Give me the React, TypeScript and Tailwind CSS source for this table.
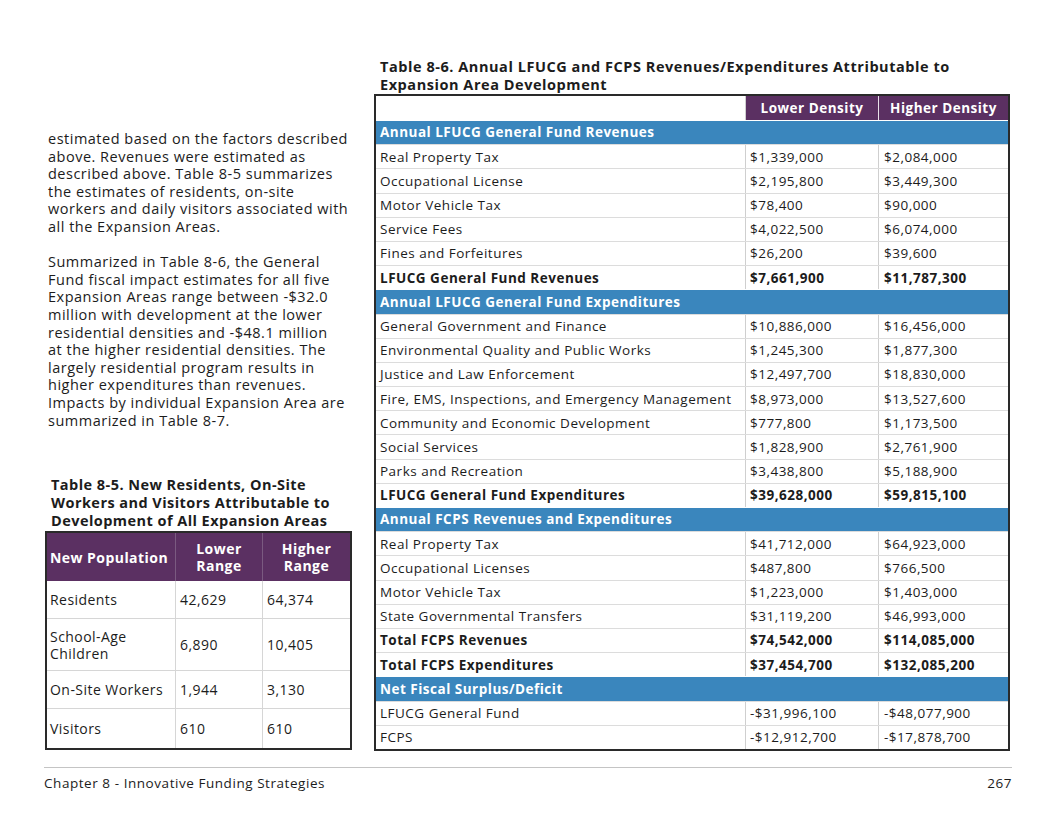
import React from 'react'

// Tabella 8-6: righe in ordine di rendering
type Row =
  | { kind: 'band'; label: string }
  | { kind: 'row'; label: string; lo: string; hi: string; bold?: boolean }

const ROWS: Row[] = [
  { kind: 'band', label: 'Annual LFUCG General Fund Revenues' },
  { kind: 'row', label: 'Real Property Tax', lo: '$1,339,000', hi: '$2,084,000' },
  { kind: 'row', label: 'Occupational License', lo: '$2,195,800', hi: '$3,449,300' },
  { kind: 'row', label: 'Motor Vehicle Tax', lo: '$78,400', hi: '$90,000' },
  { kind: 'row', label: 'Service Fees', lo: '$4,022,500', hi: '$6,074,000' },
  { kind: 'row', label: 'Fines and Forfeitures', lo: '$26,200', hi: '$39,600' },
  { kind: 'row', label: 'LFUCG General Fund Revenues', lo: '$7,661,900', hi: '$11,787,300', bold: true },
  { kind: 'band', label: 'Annual LFUCG General Fund Expenditures' },
  { kind: 'row', label: 'General Government and Finance', lo: '$10,886,000', hi: '$16,456,000' },
  { kind: 'row', label: 'Environmental Quality and Public Works', lo: '$1,245,300', hi: '$1,877,300' },
  { kind: 'row', label: 'Justice and Law Enforcement', lo: '$12,497,700', hi: '$18,830,000' },
  { kind: 'row', label: 'Fire, EMS, Inspections, and Emergency Management', lo: '$8,973,000', hi: '$13,527,600' },
  { kind: 'row', label: 'Community and Economic Development', lo: '$777,800', hi: '$1,173,500' },
  { kind: 'row', label: 'Social Services', lo: '$1,828,900', hi: '$2,761,900' },
  { kind: 'row', label: 'Parks and Recreation', lo: '$3,438,800', hi: '$5,188,900' },
  { kind: 'row', label: 'LFUCG General Fund Expenditures', lo: '$39,628,000', hi: '$59,815,100', bold: true },
  { kind: 'band', label: 'Annual FCPS Revenues and Expenditures' },
  { kind: 'row', label: 'Real Property Tax', lo: '$41,712,000', hi: '$64,923,000' },
  { kind: 'row', label: 'Occupational Licenses', lo: '$487,800', hi: '$766,500' },
  { kind: 'row', label: 'Motor Vehicle Tax', lo: '$1,223,000', hi: '$1,403,000' },
  { kind: 'row', label: 'State Governmental Transfers', lo: '$31,119,200', hi: '$46,993,000' },
  { kind: 'row', label: 'Total FCPS Revenues', lo: '$74,542,000', hi: '$114,085,000', bold: true },
  { kind: 'row', label: 'Total FCPS Expenditures', lo: '$37,454,700', hi: '$132,085,200', bold: true },
  { kind: 'band', label: 'Net Fiscal Surplus/Deficit' },
  { kind: 'row', label: 'LFUCG General Fund', lo: '-$31,996,100', hi: '-$48,077,900' },
  { kind: 'row', label: 'FCPS', lo: '-$12,912,700', hi: '-$17,878,700' },
]

const POP = [
  { label: ['Residents'], lo: '42,629', hi: '64,374', h: 'h-[38px]' },
  { label: ['School-Age', 'Children'], lo: '6,890', hi: '10,405', h: 'h-[52px]' },
  { label: ['On-Site Workers'], lo: '1,944', hi: '3,130', h: 'h-[38px]' },
  { label: ['Visitors'], lo: '610', hi: '610', h: 'h-[39px]' },
]

const PARA1 = [
  'estimated based on the factors described',
  'above. Revenues were estimated as',
  'described above. Table 8-5 summarizes',
  'the estimates of residents, on-site',
  'workers and daily visitors associated with',
  'all the Expansion Areas.',
]
const PARA2 = [
  'Summarized in Table 8-6, the General',
  'Fund fiscal impact estimates for all five',
  'Expansion Areas range between -$32.0',
  'million with development at the lower',
  'residential densities and -$48.1 million',
  'at the higher residential densities. The',
  'largely residential program results in',
  'higher expenditures than revenues.',
  'Impacts by individual Expansion Area are',
  'summarized in Table 8-7.',
]

export default function App() {
  return (
    <div className="w-[1056px] h-[816px] bg-white text-[#1c1c1c] font-['Open_Sans',sans-serif] flex flex-col">
      <div className="flex gap-[23px] pl-[48px] pt-[58px]">
        {/* Colonna sinistra: testo + tabella 8-5 */}
        <div className="w-[305px] flex flex-col pt-[72px]">
          <p className="text-[14.5px] leading-[17.6px] tracking-[0.5px]">
            {PARA1.map((l, i) => <span key={i} className="block whitespace-nowrap">{l}</span>)}
          </p>
          <p className="text-[14.5px] leading-[17.6px] tracking-[0.5px] mt-[17.6px]">
            {PARA2.map((l, i) => <span key={i} className="block whitespace-nowrap">{l}</span>)}
          </p>

          <h3 className="mt-[47px] pl-[3px] text-[14.5px] leading-[18px] font-bold tracking-[0.45px] whitespace-nowrap">
            Table 8-5. New Residents, On-Site<br />
            Workers and Visitors Attributable to<br />
            Development of All Expansion Areas
          </h3>

          <div className="-ml-[3px] mt-[1px] w-[307px] border-2 border-[#2a2a2a] text-[14px] tracking-[0.45px]">
            <div className="grid grid-cols-[129px_87px_87px] h-[48px] bg-[#5b3062] text-white font-bold leading-[17px]">
              <div className="flex items-center pl-[3px] border-r border-[#7a5a80] whitespace-nowrap">New Population</div>
              <div className="flex items-center justify-center text-center border-r border-[#7a5a80]">Lower<br />Range</div>
              <div className="flex items-center justify-center text-center">Higher<br />Range</div>
            </div>
            {POP.map((r, i) => (
              <div key={i} className={`grid grid-cols-[129px_87px_87px] ${r.h} ${i < POP.length - 1 ? 'border-b border-[#d6d6d6]' : ''}`}>
                <div className="flex flex-col justify-center pl-[3px] leading-[17px] border-r border-[#d6d6d6] whitespace-nowrap">
                  {r.label.map(l => <span key={l}>{l}</span>)}
                </div>
                <div className="flex items-center pl-[4px] border-r border-[#d6d6d6]">{r.lo}</div>
                <div className="flex items-center pl-[4px]">{r.hi}</div>
              </div>
            ))}
          </div>
        </div>

        {/* Colonna destra: tabella 8-6 */}
        <div className="w-[636px] flex flex-col -ml-[2px]">
          <h3 className="pl-[6px] text-[14.5px] leading-[18px] font-bold tracking-[0.55px] whitespace-nowrap">
            Table 8-6. Annual LFUCG and FCPS Revenues/Expenditures Attributable to<br />
            Expansion Area Development
          </h3>
          <div className="border-2 border-[#2a2a2a] text-[13.5px] tracking-[0.5px]">
            <div className="grid grid-cols-[370px_133px_129px] h-[24px]">
              <div className="bg-white border-r border-[#cfcfcf]" />
              <div className="bg-[#5b3062] text-white font-bold flex items-center justify-center border-r border-[#e8e0ea]">Lower Density</div>
              <div className="bg-[#5b3062] text-white font-bold flex items-center justify-center">Higher Density</div>
            </div>
            {ROWS.map((r, i) =>
              r.kind === 'band' ? (
                <div key={i} className="h-[24.2px] bg-[#3a86bd] text-white font-bold flex items-center pl-[4px] border-t border-white whitespace-nowrap">
                  {r.label}
                </div>
              ) : (
                <div key={i} className={`grid grid-cols-[370px_133px_129px] h-[24.2px] border-t border-[#dcdcdc] ${r.bold ? 'font-bold' : ''}`}>
                  <div className="flex items-center pl-[4px] border-r border-[#cfcfcf] whitespace-nowrap">{r.label}</div>
                  <div className="flex items-center pl-[4px] border-r border-[#cfcfcf] whitespace-nowrap">{r.lo}</div>
                  <div className="flex items-center pl-[5px] whitespace-nowrap">{r.hi}</div>
                </div>
              )
            )}
          </div>
        </div>
      </div>

      {/* Piè di pagina */}
      <div className="mx-[44px] mt-[16px] border-t border-[#c4c4c4] pt-[6px] flex justify-between text-[13.5px] leading-[18px] tracking-[0.55px]">
        <span>Chapter 8 - Innovative Funding Strategies</span>
        <span>267</span>
      </div>
    </div>
  )
}
